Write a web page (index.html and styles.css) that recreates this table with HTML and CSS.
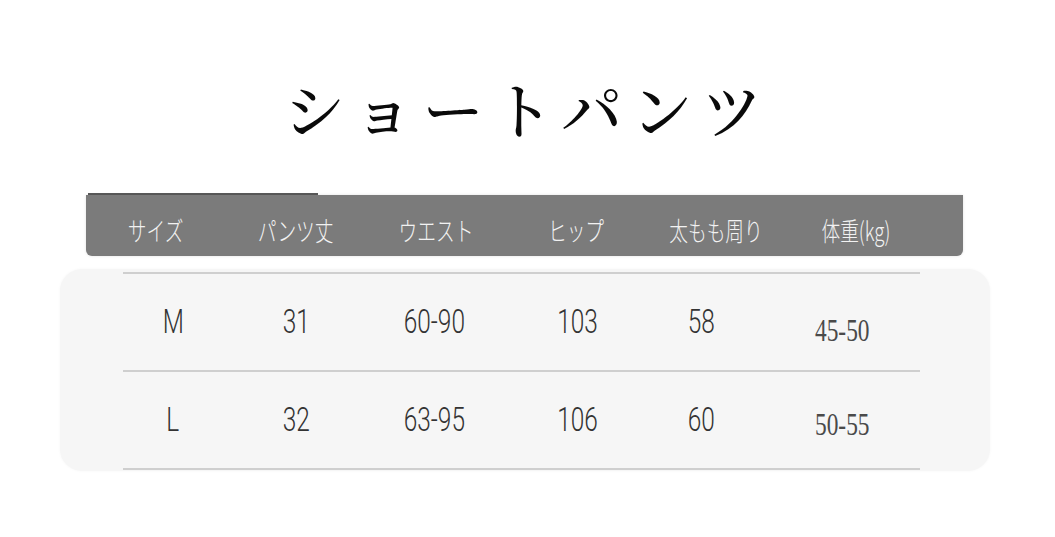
FILE: index.html
```html
<!DOCTYPE html>
<html lang="ja">
<head>
<meta charset="utf-8">
<title>ショートパンツ</title>
<link rel="stylesheet" href="styles.css">
</head>
<body>
<main class="sheet">
  <h1 class="title">ショートパンツ</h1>
  <div class="head-wrap">
    <div class="head-edge"></div>
    <div class="head-bar">
      <div class="hcell"><span>サイズ</span></div>
      <div class="hcell"><span>パンツ丈</span></div>
      <div class="hcell"><span>ウエスト</span></div>
      <div class="hcell"><span>ヒップ</span></div>
      <div class="hcell"><span>太もも周り</span></div>
      <div class="hcell"><span>体重(kg)</span></div>
    </div>
  </div>
  <section class="panel">
    <div class="rows">
      <div class="row">
        <div class="cell"><span>M</span></div>
        <div class="cell"><span>31</span></div>
        <div class="cell"><span>60-90</span></div>
        <div class="cell"><span>103</span></div>
        <div class="cell"><span>58</span></div>
        <div class="cell serif"><span>45-50</span></div>
      </div>
      <div class="row">
        <div class="cell"><span>L</span></div>
        <div class="cell"><span>32</span></div>
        <div class="cell"><span>63-95</span></div>
        <div class="cell"><span>106</span></div>
        <div class="cell"><span>60</span></div>
        <div class="cell serif low"><span>50-55</span></div>
      </div>
    </div>
  </section>
</main>
</body>
</html>
```

FILE: styles.css
```css
html, body {
  margin: 0;
  padding: 0;
  background: #ffffff;
}

.sheet {
  width: 1055px;
  height: 537px;
  overflow: hidden;
  display: flex;
  flex-direction: column;
}

.title {
  margin: 78px 0 0 0;
  height: 60px;
  font-family: "Noto Serif CJK JP", "Noto Sans CJK JP", serif;
  font-weight: 500;
  font-size: 61px;
  line-height: 60px;
  letter-spacing: 9px;
  text-align: center;
  color: #0a0a0a;
}

.head-wrap {
  margin: 55px 0 0 86px;
  width: 877px;
  display: flex;
  flex-direction: column;
}

.head-edge {
  margin-left: 2px;
  width: 230px;
  height: 2px;
  background: #5a5a5a;
}

.head-bar {
  height: 61px;
  background: #7b7b7b;
  border-radius: 0 0 6px 6px;
  box-shadow: 0 0 3px rgba(0, 0, 0, 0.12);
  display: grid;
  grid-template-columns: repeat(6, 140px);
  align-items: center;
  padding-top: 8px;
  box-sizing: border-box;
}

.hcell {
  display: flex;
  justify-content: center;
}

.hcell span {
  display: inline-block;
  font-family: "Noto Sans CJK JP", sans-serif;
  font-weight: 300;
  font-size: 26px;
  line-height: 30px;
  color: #f2f2f2;
  transform: scaleX(0.72);
  white-space: nowrap;
}

.panel {
  margin: 13px 0 0 60px;
  width: 930px;
  height: 202px;
  background: #f6f6f6;
  border-radius: 22px;
  box-shadow: 0 0 3px rgba(0, 0, 0, 0.04);
  padding: 3px 0 0 63px;
  box-sizing: border-box;
}

.rows {
  width: 797px;
  border-bottom: 2px solid #cfcfcf;
}

.row {
  height: 96px;
  border-top: 2px solid #cfcfcf;
  display: grid;
  grid-template-columns: 100px 146px 130px 156px 92px 173px;
  align-items: center;
}

.cell {
  display: flex;
  justify-content: center;
}

.cell span {
  display: inline-block;
  font-family: Roboto, "Liberation Sans", sans-serif;
  font-weight: 300;
  font-size: 33px;
  line-height: 36px;
  color: #333333;
  transform: scaleX(0.74);
  white-space: nowrap;
}

.row .cell:last-child {
  justify-content: flex-start;
  padding-left: 68px;
}

.cell.serif span {
  font-family: "Liberation Serif", "Times New Roman", serif;
  font-weight: 400;
  font-size: 32px;
  color: #4a4a4a;
  transform-origin: left center;
  transform: scaleX(0.73) translateY(8px);
}

.cell.serif.low span {
  transform: scaleX(0.73) translateY(4px);
}
```
